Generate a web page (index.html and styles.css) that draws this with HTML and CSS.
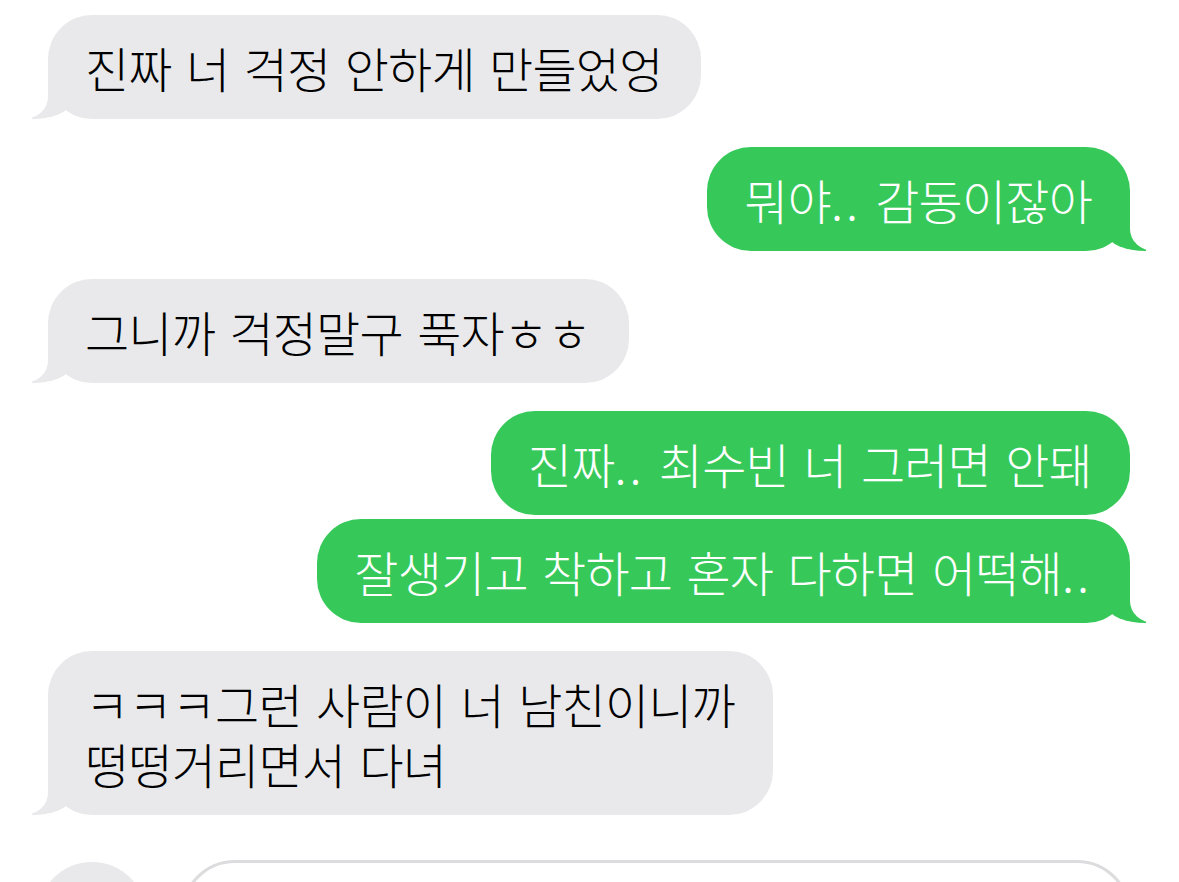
FILE: index.html
```html
<!DOCTYPE html>
<html>
<head>
  <title>Messages</title>
  <meta charset="utf-8">
  <meta name="viewport" content="width=device-width, initial-scale=1.0">
  <link rel="stylesheet" href="styles.css">
</head>
<body>
  <div class="thread">
    <div class="msg them tail">진짜 너 걱정 안하게 만들었엉</div>
    <div class="msg me tail">뭐야<span class="dots">..</span> 감동이잖아</div>
    <div class="msg them tail">그니까 걱정말구 푹자ㅎㅎ</div>
    <div class="msg me">진짜<span class="dots">..</span> 최수빈 너 그러면 안돼</div>
    <div class="msg me tail grouped">잘생기고 착하고 혼자 다하면 어떡해<span class="dots">..</span></div>
    <div class="msg them tail">ㅋㅋㅋ그런 사람이 너 남친이니까<br>떵떵거리면서 다녀</div>
  </div>
  <div class="composer">
    <div class="plus"></div>
    <div class="input"></div>
  </div>
</body>
</html>
```

FILE: styles.css
```css
html, body { margin: 0; padding: 0; background: #fff; }
body { width: 1179px; height: 882px; overflow: hidden; font-family: "Noto Sans CJK KR", "Noto Sans", sans-serif; }

.thread { display: flex; flex-direction: column; padding: 15px 49px 0 48px; }

.msg {
  position: relative;
  max-width: 900px;
  padding: 22px 38px 22px 37px;
  border-radius: 44px;
  font-size: 48px;
  font-weight: 300;
  line-height: 60px;
  letter-spacing: -0.8px;
  word-spacing: 4.5px;
  margin-top: 28px;
}
.msg:first-child { margin-top: 0; }
.msg.grouped { margin-top: 4px; }
.dots { letter-spacing: 3px; }

.them { align-self: flex-start; background: #e9e9eb; color: #000; }
.me { align-self: flex-end; background: #36c95a; color: #fff; }

/* bubble tails */
.tail::before, .tail::after { content: ""; position: absolute; bottom: 0; height: 50px; }
.them.tail::before { left: -16px; width: 38px; background: #e9e9eb; border-bottom-right-radius: 38px 16px; }
.them.tail::after { left: -40px; width: 40px; background: #fff; border-bottom-right-radius: 24px 22px; }
.me.tail::before { right: -16px; width: 38px; background: #36c95a; border-bottom-left-radius: 38px 16px; }
.me.tail::after { right: -40px; width: 40px; background: #fff; border-bottom-left-radius: 24px 22px; }

.composer { display: flex; align-items: flex-start; gap: 35px; padding: 45px 0 0 38px; }
.plus { width: 108px; height: 108px; border-radius: 50%; background: #e9e9eb; margin-top: 2px; }
.input { width: 944px; height: 104px; border: 3px solid #dcdcde; border-radius: 54px; }
```
